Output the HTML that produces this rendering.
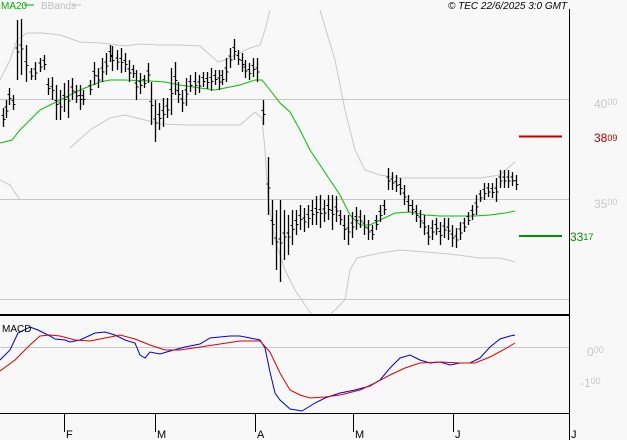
<!DOCTYPE html>
<html><head><style>
body{margin:0;background:#f8f8f8;width:627px;height:440px;overflow:hidden;font-family:"Liberation Sans",sans-serif}
</style></head><body>
<svg width="627" height="440" xmlns="http://www.w3.org/2000/svg" style="display:block">
<rect width="627" height="440" fill="#f8f8f8"/>
<g stroke="#c8c8c8" stroke-width="1" fill="none">
<line x1="0" y1="99.5" x2="569" y2="99.5"/>
<line x1="0" y1="199.5" x2="569" y2="199.5"/>
<line x1="0" y1="299.5" x2="569" y2="299.5"/>
<line x1="0" y1="347.5" x2="569" y2="347.5"/>
<polyline points="0,80 10,60 17,40 27,33 42,33 60,35 80,42 100,43 110,44 125,46 140,44 160,45 180,45 200,46 218,62 225,60 235,55 250,48 260,45 265,30 270,10"/>
<polyline points="320,10 335,60 345,110 355,150 365,170 380,175 400,178 440,178 480,178 500,175 515,162"/>
<polyline points="0,180 10,185 20,200"/>
<polyline points="70,148 90,130 110,118 125,115 145,120 160,124 190,125 215,125 240,125 255,112 262,118 265,150 268,200 275,240 285,270 295,290 305,305 312,315"/>
<polyline points="330,315 345,300 350,270 357,258 380,253 400,250 450,254 480,258 500,258 515,262"/>
</g>
<polyline fill="none" stroke="#00c000" stroke-width="1" points="0,143 12,140 20,130 40,110 60,100 80,90 100,82 110,80 125,80 150,81 165,82 180,85 200,88 215,90 225,88 240,85 255,80 262,80 270,90 280,103 290,112 300,130 310,150 320,165 330,180 340,195 350,215 360,225 370,225 380,220 395,213 410,212 425,215 440,216 460,216 475,216 490,215 505,213 515,211"/>
<g stroke="#000" stroke-width="1.3" id="bars"></g>
<line x1="519" y1="136.5" x2="562" y2="136.5" stroke="#c00000" stroke-width="2"/>
<line x1="519" y1="236" x2="562" y2="236" stroke="#009000" stroke-width="2"/>
<line x1="569.5" y1="9" x2="569.5" y2="414" stroke="#000" stroke-width="1"/>
<line x1="0" y1="315" x2="569" y2="315" stroke="#000" stroke-width="2"/>
<line x1="0" y1="413.5" x2="569" y2="413.5" stroke="#000" stroke-width="1"/>
<polyline fill="none" stroke="#0000e0" stroke-width="1" points="0,360 10,350 18,333 30,327 38,330 50,336 55,339 65,340 70,342 80,340 95,333 105,332 115,335 125,340 135,343 140,355 145,358 150,352 160,354 170,351 185,347 200,344 210,338 220,337 230,336 240,336 250,338 260,340 265,348 270,372 275,393 280,400 290,409 302,411 315,403 325,398 340,393 355,390 370,386 380,380 390,368 400,358 410,355 420,360 430,363 440,362 450,365 460,363 470,363 480,358 490,347 500,339 510,336 515,335"/>
<polyline fill="none" stroke="#e00000" stroke-width="1" points="0,371 15,360 30,345 40,336 50,335 60,336 75,340 90,341 105,338 120,335 135,339 150,345 165,350 180,350 200,347 220,344 240,341 260,341 270,352 280,373 290,390 300,395 310,398 325,397 340,395 360,390 375,383 390,375 405,368 420,363 440,362 460,363 475,363 490,357 505,349 515,343"/>
<g stroke="#000" stroke-width="1">
<line x1="64.5" y1="414" x2="64.5" y2="432"/><line x1="155.5" y1="414" x2="155.5" y2="432"/>
<line x1="255.5" y1="414" x2="255.5" y2="432"/><line x1="353.5" y1="414" x2="353.5" y2="432"/>
<line x1="453.5" y1="414" x2="453.5" y2="432"/><line x1="569.5" y1="414" x2="569.5" y2="440"/>
</g>
<g font-size="11" fill="#000">
<text x="66" y="438">F</text><text x="157" y="438">M</text><text x="257" y="438">A</text>
<text x="355" y="438">M</text><text x="455" y="438">J</text><text x="571" y="438">J</text>
<text x="2" y="332" font-size="10">MACD</text>
</g>
<text x="1" y="9" font-size="10" fill="#00b000">MA20</text>
<line x1="24" y1="5" x2="34" y2="5" stroke="#00b000"/>
<text x="41" y="9" font-size="10" fill="#c0c0c0">BBands</text>
<line x1="73" y1="5" x2="81" y2="5" stroke="#c0c0c0"/>
<text x="448" y="9" font-size="10" font-style="italic" fill="#000">© TEC 22/6/2025 3:0 GMT</text>
<g font-size="12" fill="#c8c8c8">
<text x="594" y="108">40<tspan font-size="9" dy="-3">00</tspan></text>
<text x="594" y="208">35<tspan font-size="9" dy="-3">00</tspan></text>
<text x="587" y="356">0<tspan font-size="9" dy="-3">00</tspan></text>
<text x="580" y="387">-1<tspan font-size="9" dy="-3">00</tspan></text>
</g>
<text x="594" y="142" font-size="12" fill="#c00000">38<tspan font-size="9" dy="-1">09</tspan></text>
<text x="570" y="241" font-size="12" fill="#009000">33<tspan font-size="9" dy="-1">17</tspan></text>
</svg>
<script>
var d=[[3,108,127],[6,100,118],[9,88,105],[13,95,110],[17,20,80],[21,19,75],[26,45,82],[31,68,80],[35,62,80],[40,58,72],[44,55,70],[48,78,95],[52,77,100],[56,85,120],[60,90,120],[64,83,112],[68,80,118],[72,78,100],[76,85,103],[80,85,110],[83,90,105],[90,80,95],[94,62,85],[98,68,88],[102,58,82],[106,53,75],[110,45,62],[112,46,71],[117,50,70],[121,48,73],[125,53,72],[129,60,82],[133,65,78],[136,70,100],[140,73,94],[144,75,88],[148,63,83],[151,82,125],[155,100,142],[159,103,130],[163,98,127],[167,98,118],[171,68,115],[175,62,95],[178,82,103],[182,90,112],[186,78,106],[190,75,92],[195,72,95],[199,75,93],[203,72,87],[207,72,89],[211,68,91],[215,70,85],[219,70,90],[222,70,85],[226,58,82],[230,48,68],[234,39,60],[238,50,65],[242,53,72],[245,60,78],[249,63,80],[253,58,77],[257,58,82],[263,100,125],[268,157,215],[272,200,245],[276,210,270],[280,200,282],[284,210,260],[288,215,255],[292,210,245],[296,210,235],[300,205,230],[304,208,232],[308,205,228],[312,200,225],[316,196,225],[320,195,228],[324,200,222],[328,195,220],[332,195,230],[336,196,222],[340,210,225],[344,215,240],[348,215,245],[352,212,238],[356,207,230],[360,210,228],[364,215,235],[368,220,240],[372,225,240],[376,215,230],[380,205,222],[384,200,215],[388,168,190],[392,172,190],[396,175,192],[400,178,195],[404,185,205],[408,195,212],[412,200,215],[416,205,222],[420,210,228],[424,215,235],[428,225,245],[432,220,240],[436,218,235],[440,222,245],[444,218,238],[448,218,240],[452,225,247],[456,228,248],[460,222,240],[464,218,232],[468,212,225],[472,205,220],[476,195,215],[480,190,202],[484,183,200],[488,183,197],[492,183,198],[496,178,202],[500,170,188],[504,170,188],[508,170,188],[512,172,186],[516,175,190]];
var g=document.getElementById('bars'),s='';
d.forEach(function(b){var x=b[0]+.5,c=(b[1]+b[2])/2;s+='<line x1="'+x+'" y1="'+b[1]+'" x2="'+x+'" y2="'+b[2]+'"/><line x1="'+(x-2)+'" y1="'+(c-2)+'" x2="'+x+'" y2="'+(c-2)+'" stroke-width="1"/><line x1="'+x+'" y1="'+(c+2)+'" x2="'+(x+2)+'" y2="'+(c+2)+'" stroke-width="1"/>';});
g.innerHTML=s;
</script>
</body></html>
